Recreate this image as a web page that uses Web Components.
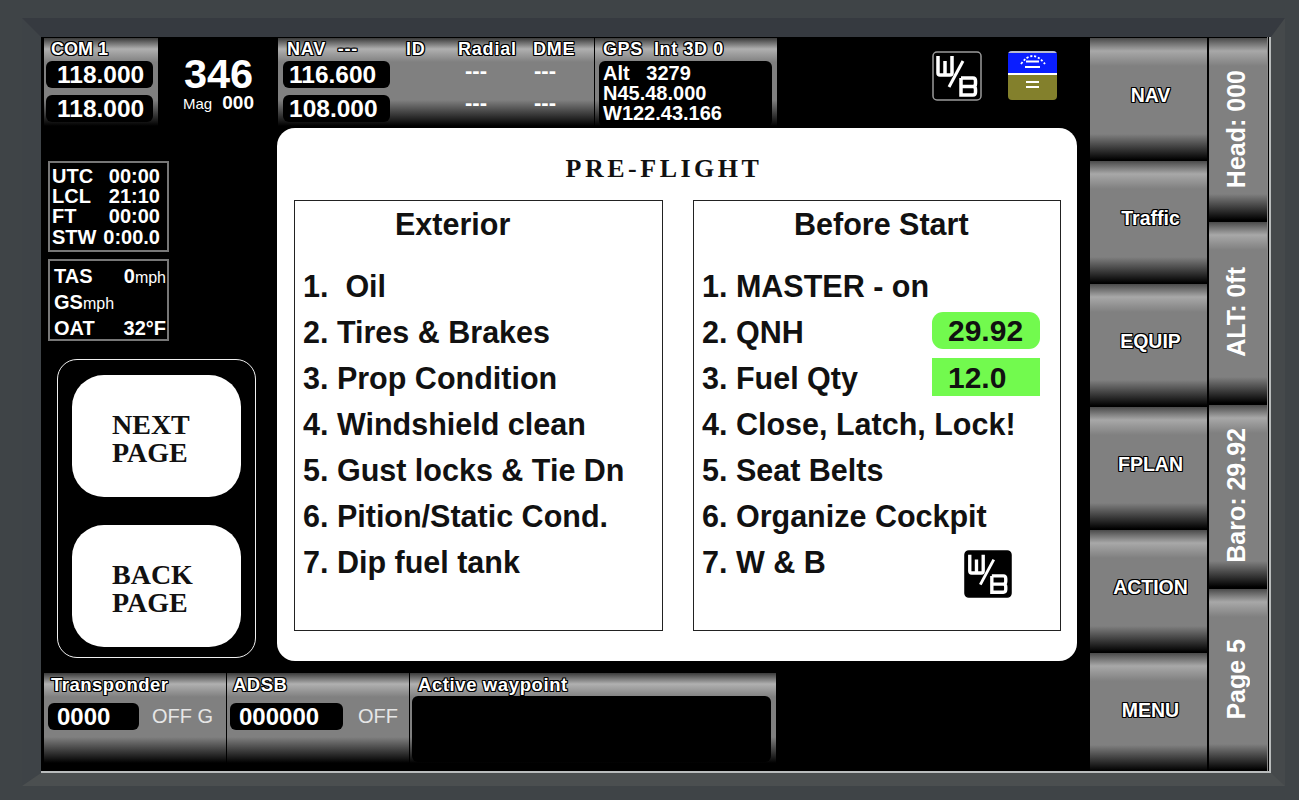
<!DOCTYPE html>
<html>
<head>
<meta charset="utf-8">
<title>EFIS pre-flight</title>
<style>
  html, body { margin: 0; height: 100%; background: #3f4447; overflow: hidden; }
  body { font-family: "Liberation Sans", Arial, sans-serif; }
</style>
</head>
<body>
<efis-bezel>
  <efis-main>
    <top-strip slot="top"></top-strip>
    <side-info slot="left"></side-info>
    <preflight-panel slot="center"></preflight-panel>
    <bottom-strip slot="bottom"></bottom-strip>
  </efis-main>
  <soft-keys></soft-keys>
  <side-keys></side-keys>
</efis-bezel>

<script>
const PANEL_GRAD = `linear-gradient(180deg, #3a3a3a 0, #b0b0b0 11px, #808080 24px, #808080 calc(100% - 26px), #000 100%)`;
const KEY_GRAD = `linear-gradient(180deg, #4a4a4a 0, #a8a8a8 13px, #808080 28px, #808080 calc(100% - 26px), #000 100%)`;
const TITLE_SHADOW = `-1px 0 0 #000, 1px 0 0 #000, 0 -1px 0 #000, 0 1px 0 #000, -1px -1px 0 #000, 1px -1px 0 #000, -1px 1px 0 #000, 1px 1px 0 #000`;
const SLAB = `"Liberation Serif", "Times New Roman", serif`;

class EfisBezel extends HTMLElement {
    constructor() {
        super();
        this.attachShadow({ mode: 'open' });
        this.shadowRoot.innerHTML = `
            <style>
                :host {
                    display: block;
                    box-sizing: border-box;
                    width: 1299px;
                    height: 800px;
                    padding: 18px 14px 14px 22px;
                    background: #3f4447;
                }
                .frame {
                    box-sizing: border-box;
                    height: 768px;
                    border-style: solid;
                    border-width: 19px 14px 13px 19px;
                    border-color: #363a40 #45494b #4b4f50 #3e4347;
                }
                .screen {
                    box-sizing: border-box;
                    height: 100%;
                    display: flex;
                    background: #000;
                    border-right: 2px solid #b9bcbc;
                    border-bottom: 2px solid #b9bcbc;
                }
            </style>
            <div class="frame"><div class="screen"><slot></slot></div></div>
        `;
    }
}

class EfisMain extends HTMLElement {
    constructor() {
        super();
        this.attachShadow({ mode: 'open' });
        this.shadowRoot.innerHTML = `
            <style>
                :host { display: flex; flex-direction: column; width: 1049px; flex: none; }
                .mid { display: flex; margin-top: 2px; height: 533px; }
                .top { height: 89px; }
            </style>
            <div class="top"><slot name="top"></slot></div>
            <div class="mid"><slot name="left"></slot><slot name="center"></slot></div>
            <slot name="bottom"></slot>
        `;
    }
}

class GrayPanel extends HTMLElement {
    constructor() {
        super();
        this.attachShadow({ mode: 'open' });
        this.shadowRoot.innerHTML = `
            <style>
                :host {
                    display: block;
                    box-sizing: border-box;
                    background: ${PANEL_GRAD};
                    color: #fff;
                }
                .title {
                    display: flex;
                    height: 23px;
                    padding-left: var(--title-pad, 7px);
                    white-space: pre;
                    font: var(--title-size, 20px)/23px "Liberation Sans", Arial, sans-serif;
                    letter-spacing: var(--title-ls, .6px);
                    text-shadow: ${TITLE_SHADOW};
                }
                .title ::slotted(*) { font-weight: bold; }
            </style>
            <div class="title"><slot name="title"></slot></div>
            <slot></slot>
        `;
    }
}

class FreqBox extends HTMLElement {
    constructor() {
        super();
        this.attachShadow({ mode: 'open' });
        this.shadowRoot.innerHTML = `
            <style>
                :host {
                    display: flex;
                    align-items: center;
                    box-sizing: border-box;
                    width: var(--w, 107px);
                    height: 27px;
                    padding-left: var(--pad, 11px);
                    background: #000;
                    border-radius: 6px;
                    color: #fff;
                    font: bold var(--fs, 24.500px) "Liberation Sans", Arial, sans-serif;
                }
            </style>
            <slot></slot>
        `;
    }
}

class WbIcon extends HTMLElement {
    constructor() {
        super();
        this.attachShadow({ mode: 'open' });
        this.shadowRoot.innerHTML = `
            <style>
                :host { display: block; width: 50px; height: 50px; line-height: 0; }
                svg { width: 100%; height: 100%; }
            </style>
            <svg viewBox="0 0 50 50">
                <rect x="1" y="1" width="48" height="48" rx="4" fill="#000" stroke="var(--edge, #9a9a9a)" stroke-width="1.5"/>
                <g fill="none" stroke="#fff" stroke-width="3.500">
                    <path d="M6 5 V22 Q6 24 8 24 H18 Q20 24 20 22 V5 M13 10 V24"/>
                    <path d="M31 10 L17 36" stroke-width="3"/>
                    <path d="M29 27 H41 Q43.500 27 43.500 30 V32.500 Q43.500 35.500 41 35.500 H29 M41 35.500 Q43.500 35.500 43.500 38.500 V41 Q43.500 44 41 44 H29 V27"/>
                </g>
            </svg>
        `;
    }
}

class AttitudeIcon extends HTMLElement {
    constructor() {
        super();
        this.attachShadow({ mode: 'open' });
        this.shadowRoot.innerHTML = `
            <style>
                :host { display: block; width: 49px; height: 49px; line-height: 0; }
            </style>
            <svg width="49" height="49" viewBox="0 0 49 49">
                <defs><clipPath id="c"><rect x="0" y="0" width="49" height="49" rx="4"/></clipPath></defs>
                <g clip-path="url(#c)">
                    <rect width="49" height="23" fill="#0a1eff"/>
                    <rect y="23" width="49" height="26" fill="#83802c"/>
                    <rect y="22" width="49" height="2" fill="#fff"/>
                    <rect width="49" height="2" fill="#b9bccf"/>
                </g>
                <path d="M13 13 Q24.500 -3 37 13" fill="none" stroke="#fff" stroke-width="1.800" stroke-dasharray="2.200 1.800"/>
                <path d="M18 10.500 H31 M17 16 H32 M18 31 H31 M18 36 H31" stroke="#fff" stroke-width="2.200" fill="none"/>
            </svg>
        `;
    }
}

class TopStrip extends HTMLElement {
    constructor() {
        super();
        this.attachShadow({ mode: 'open' });
        this.shadowRoot.innerHTML = `
            <style>
                :host { display: flex; height: 89px; padding-top: 1px; box-sizing: border-box; color: #fff; }
                .com { width: 114px; margin-left: 3px; --title-size: 18px; --title-ls: 0; }
                .stack { display: flex; flex-direction: column; gap: 7px; padding-left: 2px; }
                .heading {
                    width: 119px;
                    display: flex;
                    flex-direction: column;
                    align-items: center;
                    font: bold 41.500px/40px "Liberation Sans", Arial, sans-serif;
                    padding: 16px 0 0 2px;
                    box-sizing: border-box;
                }
                .mag { display: flex; width: 71px; justify-content: space-between; align-items: baseline; font: 15px/18px "Liberation Sans", Arial, sans-serif; }
                .mag b { font-size: 19px; }
                .nav { width: 316px; margin: 0 1px; --pad: 6px; --title-pad: 9px; --title-size: 18px; --title-ls: .8px; }
                .nav-body { display: grid; grid-template-columns: 158.500px 69px 69px; padding-left: 5px; }
                .nav-body .stack { padding-left: 0; }
                .dash { font: bold 22px/27px "Liberation Sans", Arial, sans-serif; text-align: center; height: 28px; margin-top: -4px; }
                .dash + .dash { margin-top: 4px; }
                .nav-title { display: grid; grid-template-columns: 119px 52px 75px 50px; width: 296px; }
                .gps { width: 182px; --title-size: 18px; --title-ls: .6px; --title-pad: 8px; }
                .gps-box {
                    margin: 0 5px 0 4px;
                    height: 66px;
                    box-sizing: border-box;
                    background: #000;
                    border-radius: 6px;
                    padding: 2px 4px;
                    font: bold 20px/20px "Liberation Sans", Arial, sans-serif;
                    white-space: pre;
                }
                .icons { display: flex; gap: 26px; margin-left: 155px; padding-top: 13px; }
            </style>
            <gray-panel class="com">
                <span slot="title">COM 1</span>
                <div class="stack"><freq-box>118.000</freq-box><freq-box>118.000</freq-box></div>
            </gray-panel>
            <div class="heading">346<div class="mag"><span>Mag</span><b>000</b></div></div>
            <gray-panel class="nav">
                <span slot="title" class="nav-title"><span>NAV  ---</span><span>ID</span><span>Radial</span><span>DME</span></span>
                <div class="nav-body">
                    <div class="stack"><freq-box>116.600</freq-box><freq-box>108.000</freq-box></div>
                    <div><div class="dash">---</div><div class="dash">---</div></div>
                    <div><div class="dash">---</div><div class="dash">---</div></div>
                </div>
            </gray-panel>
            <gray-panel class="gps">
                <span slot="title">GPS  Int 3D 0</span>
                <div class="gps-box">Alt   3279
N45.48.000
W122.43.166</div>
            </gray-panel>
            <div class="icons"><wb-icon></wb-icon><attitude-icon></attitude-icon></div>
        `;
    }
}

class SideInfo extends HTMLElement {
    constructor() {
        super();
        this.attachShadow({ mode: 'open' });
        this.shadowRoot.innerHTML = `
            <style>
                :host {
                    display: block;
                    width: 236px;
                    flex: none;
                    box-sizing: border-box;
                    padding: 33px 0 0 7px;
                    color: #fff;
                    font: bold 20px "Liberation Sans", Arial, sans-serif;
                }
                .box {
                    box-sizing: border-box;
                    width: 121px;
                    border: 2px solid #777;
                    padding: 3px 0 0 2px;
                }
                .times { height: 91px; line-height: 20.200px; margin-bottom: 7px; }
                .times .row { padding-right: 7px; }
                .air { height: 82px; line-height: 24px; }
                .row { display: flex; justify-content: space-between; padding-right: 1px; white-space: nowrap; }
                small { font-size: 16px; font-weight: normal; }
                .air .row { padding-left: 2px; }
                .frame {
                    box-sizing: border-box;
                    width: 199px;
                    height: 299px;
                    margin: 18px 0 0 9px;
                    padding: 15px 14px 10px 14px;
                    border: 1.500px solid #f0f0f0;
                    border-radius: 20px;
                    display: flex;
                    flex-direction: column;
                    gap: 28px;
                }
            </style>
            <div class="box times">
                <div class="row"><span>UTC</span><span>00:00</span></div>
                <div class="row"><span>LCL</span><span>21:10</span></div>
                <div class="row"><span>FT</span><span>00:00</span></div>
                <div class="row"><span>STW</span><span>0:00.0</span></div>
            </div>
            <div class="box air">
                <div class="row"><span>TAS</span><span>0<small>mph</small></span></div>
                <div class="row"><span>GS<small>mph</small></span></div>
                <div class="row"><span>OAT</span><span>32°F</span></div>
            </div>
            <div class="frame">
                <page-button>NEXT<br>PAGE</page-button>
                <page-button>BACK<br>PAGE</page-button>
            </div>
        `;
    }
}

class PageButton extends HTMLElement {
    constructor() {
        super();
        this.attachShadow({ mode: 'open' });
        this.shadowRoot.innerHTML = `
            <style>
                :host {
                    display: flex;
                    align-items: center;
                    box-sizing: border-box;
                    height: 122px;
                    padding: 6px 0 0 40px;
                    background: #fff;
                    border-radius: 32px;
                    color: #111;
                    font: bold 28px/28.500px ${SLAB};
                    white-space: nowrap;
                }
            </style>
            <div><slot></slot></div>
        `;
    }
}

class PreflightPanel extends HTMLElement {
    constructor() {
        super();
        this.attachShadow({ mode: 'open' });
        this.shadowRoot.innerHTML = `
            <style>
                :host {
                    display: block;
                    box-sizing: border-box;
                    width: 800px;
                    height: 533px;
                    flex: none;
                    background: #fff;
                    border-radius: 18px;
                    padding: 0 16px 0 17px;
                    color: #111;
                }
                h1 {
                    margin: 0;
                    height: 72px;
                    padding: 22px 27px 0 0;
                    box-sizing: border-box;
                    text-align: center;
                    font: bold 26px/38px ${SLAB};
                    letter-spacing: 3.500px;
                }
                .cols { display: flex; justify-content: space-between; }
                .narrow { width: 368px; }
            </style>
            <h1>PRE-FLIGHT</h1>
            <div class="cols">
                <check-list heading="Exterior">
                    <check-item>1.&nbsp; Oil</check-item>
                    <check-item>2. Tires &amp; Brakes</check-item>
                    <check-item>3. Prop Condition</check-item>
                    <check-item>4. Windshield clean</check-item>
                    <check-item>5. Gust locks &amp; Tie Dn</check-item>
                    <check-item>6. Pition/Static Cond.</check-item>
                    <check-item>7. Dip fuel tank</check-item>
                </check-list>
                <check-list class="narrow" heading="Before Start">
                    <check-item>1. MASTER - on</check-item>
                    <check-item>2. QNH<value-chip slot="end" round>29.92</value-chip></check-item>
                    <check-item>3. Fuel Qty<value-chip slot="end">12.0</value-chip></check-item>
                    <check-item>4. Close, Latch, Lock!</check-item>
                    <check-item>5. Seat Belts</check-item>
                    <check-item>6. Organize Cockpit</check-item>
                    <check-item>7. W &amp; B<wb-icon slot="end" style="width:48px;height:48px;margin:11px 48px 0 0;--edge:#000"></wb-icon></check-item>
                </check-list>
            </div>
        `;
    }
}

class CheckList extends HTMLElement {
    constructor() {
        super();
        this.attachShadow({ mode: 'open' });
        this.shadowRoot.innerHTML = `
            <style>
                :host {
                    display: block;
                    box-sizing: border-box;
                    width: 369px;
                    height: 431px;
                    border: 1px solid #222;
                    padding: 0 0 0 8px;
                }
                .head {
                    height: 62px;
                    padding: 6px 0 0 92px;
                    box-sizing: border-box;
                    font: bold 30.500px/34px "Liberation Sans", Arial, sans-serif;
                }
            </style>
            <div class="head"></div>
            <slot></slot>
        `;
        this.shadowRoot.querySelector('.head').textContent = this.getAttribute('heading');
    }
}

class CheckItem extends HTMLElement {
    constructor() {
        super();
        this.attachShadow({ mode: 'open' });
        this.shadowRoot.innerHTML = `
            <style>
                :host {
                    display: flex;
                    justify-content: space-between;
                    align-items: flex-start;
                    height: 46px;
                    font: bold 30.500px/46px "Liberation Sans", Arial, sans-serif;
                    white-space: nowrap;
                }
            </style>
            <span><slot></slot></span>
            <slot name="end"></slot>
        `;
    }
}

class ValueChip extends HTMLElement {
    constructor() {
        super();
        this.attachShadow({ mode: 'open' });
        this.shadowRoot.innerHTML = `
            <style>
                :host {
                    display: flex;
                    align-items: center;
                    box-sizing: border-box;
                    width: 108px;
                    height: 38px;
                    margin: 3px 20px 0 0;
                    padding-left: 16px;
                    background: #72fa4e;
                    color: #111;
                    font: bold 30px/37px "Liberation Sans", Arial, sans-serif;
                }
                :host([round]) { border-radius: 11px; height: 37px; }
            </style>
            <slot></slot>
        `;
    }
}

class BottomStrip extends HTMLElement {
    constructor() {
        super();
        this.attachShadow({ mode: 'open' });
        this.shadowRoot.innerHTML = `
            <style>
                :host {
                    display: flex;
                    height: 90px;
                    margin-top: 12px;
                    margin-left: 3px;
                    gap: 1px;
                    color: #fff;
                }
                gray-panel { width: 182px; --fs: 24px; --pad: 9px; --title-size: 18.500px; --title-ls: .5px; }
                .row {
                    display: flex;
                    align-items: center;
                    padding: 7px 0 0 4px;
                    font: 20px/27px "Liberation Sans", Arial, sans-serif;
                    color: #e6e6e6;
                    white-space: nowrap;
                }
                .way { width: 366px; --title-pad: 8px; --title-ls: .6px; }
                .adsb { --title-pad: 6px; }
                .way-box { margin: 0 5px 0 2px; height: 66px; background: #000; border-radius: 6px; }
            </style>
            <gray-panel>
                <span slot="title">Transponder</span>
                <div class="row"><freq-box style="--w:91px">0000</freq-box><span style="margin-left:13px">OFF G</span></div>
            </gray-panel>
            <gray-panel class="adsb">
                <span slot="title">ADSB</span>
                <div class="row" style="padding-left:3px"><freq-box style="--w:113px">000000</freq-box><span style="margin-left:15px">OFF</span></div>
            </gray-panel>
            <gray-panel class="way">
                <span slot="title">Active waypoint</span>
                <div class="way-box"></div>
            </gray-panel>
        `;
    }
}

class SoftKeys extends HTMLElement {
    constructor() {
        super();
        this.attachShadow({ mode: 'open' });
        const labels = ['NAV', 'Traffic', 'EQUIP', 'FPLAN', 'ACTION', 'MENU'];
        this.shadowRoot.innerHTML = `
            <style>
                :host { display: flex; flex-direction: column; flex: none; width: 117px; height: 100%; }
                key-button { height: 123px; flex: none; }
                key-button:last-child { height: auto; flex: 1; }
            </style>
            ${labels.map(l => `<key-button>${l}</key-button>`).join('')}
        `;
    }
}

class KeyButton extends HTMLElement {
    constructor() {
        super();
        this.attachShadow({ mode: 'open' });
        this.shadowRoot.innerHTML = `
            <style>
                :host {
                    display: flex;
                    justify-content: center;
                    box-sizing: border-box;
                    padding: 46px 0 0 4px;
                    background: ${KEY_GRAD};
                    border-top: 1px solid #000;
                    color: #fff;
                    font: bold 19.500px/22px "Liberation Sans", Arial, sans-serif;
                    text-shadow: ${TITLE_SHADOW};
                }
            </style>
            <slot></slot>
        `;
    }
}

class SideKeys extends HTMLElement {
    constructor() {
        super();
        this.attachShadow({ mode: 'open' });
        const labels = ['Head: 000', 'ALT: 0ft', 'Baro: 29.92', 'Page 5'];
        this.shadowRoot.innerHTML = `
            <style>
                :host { display: flex; flex-direction: column; flex: none; width: 59px; margin-left: 2px; height: 100%; border-right: 1px solid #888; box-sizing: border-box; }
                .key {
                    flex: 1;
                    display: flex;
                    align-items: center;
                    justify-content: center;
                    box-sizing: border-box;
                    padding-right: 4px;
                    background: ${KEY_GRAD};
                    border-top: 1px solid #000;
                    border-bottom: 1px solid #000;
                    color: #fff;
                    font: bold 25px "Liberation Sans", Arial, sans-serif;
                }
                .key span { writing-mode: vertical-rl; transform: rotate(180deg); white-space: nowrap; }
            </style>
            ${labels.map(l => `<div class="key"><span>${l}</span></div>`).join('')}
        `;
    }
}

customElements.define('gray-panel', GrayPanel);
customElements.define('freq-box', FreqBox);
customElements.define('wb-icon', WbIcon);
customElements.define('attitude-icon', AttitudeIcon);
customElements.define('page-button', PageButton);
customElements.define('check-item', CheckItem);
customElements.define('value-chip', ValueChip);
customElements.define('check-list', CheckList);
customElements.define('key-button', KeyButton);
customElements.define('efis-bezel', EfisBezel);
customElements.define('efis-main', EfisMain);
customElements.define('top-strip', TopStrip);
customElements.define('side-info', SideInfo);
customElements.define('preflight-panel', PreflightPanel);
customElements.define('bottom-strip', BottomStrip);
customElements.define('soft-keys', SoftKeys);
customElements.define('side-keys', SideKeys);
</script>
</body>
</html>
